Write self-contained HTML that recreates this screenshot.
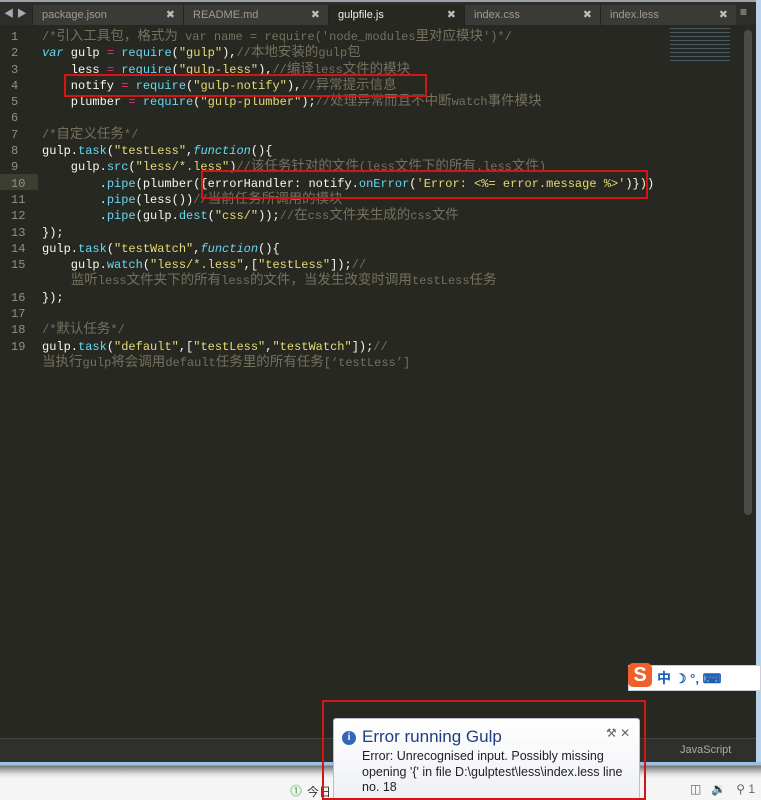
<!DOCTYPE html>
<html><head><meta charset="utf-8"><style>
*{margin:0;padding:0;box-sizing:border-box}
body{width:761px;height:800px;overflow:hidden;background:#f4f4f4;position:relative;font-family:"Liberation Sans","Noto Sans CJK SC",sans-serif}
.tabs{position:absolute;left:0;top:0;width:756px;height:25px;background:#2d2e2a;border-top:2px solid #9aa2aa}
.tab{position:absolute;top:3px;height:22px;background:#3a3b36;color:#9c9c94;font-size:11px;line-height:20px;padding-left:9px;border-left:1px solid #222}
.tab .x{position:absolute;right:8px;top:0;color:#bbb;font-size:11px}
.tab.act{background:#272822;color:#eee}
.ed{position:absolute;left:0;top:25px;width:756px;height:713px;background:#272822}
.code{position:absolute;left:0;top:4px;font-family:"Liberation Mono","Noto Sans CJK SC",monospace;font-size:12px;line-height:16.3px;color:#f8f8f2;white-space:pre}
.code i{font-style:normal;font-size:13.5px;line-height:10px}
.ln{display:inline-block;width:42px;padding-left:11px;color:#8f908a}
.c{color:#75715e}.s{color:#e6db74}.f{color:#66d9ef}.k{color:#66d9ef;font-style:italic}.o{color:#f92672}
.rb{position:absolute;border:2.5px solid #d41515}
.status{position:absolute;left:0;top:738px;width:756px;height:24px;background:#2f302c;border-top:1px solid #444;color:#aaa;font-size:11px}
.frame{position:absolute;right:0;top:0;width:5px;height:770px;background:#b8d4ea}
.task{position:absolute;left:0;top:762px;width:761px;height:38px;background:linear-gradient(#9ec0e0 0,#9ec0e0 3px,#777 4px,#ddd 12px,#f5f5f5 16px)}
</style></head><body>
<div class="tabs">
<span style="position:absolute;left:4px;top:3px;color:#aaa;font-size:10px">◀ ▶</span>
<div class="tab" style="left:32px;width:151px">package.json<span class="x">✖</span></div>
<div class="tab" style="left:183px;width:145px">README.md<span class="x">✖</span></div>
<div class="tab act" style="left:328px;width:136px">gulpfile.js<span class="x">✖</span></div>
<div class="tab" style="left:464px;width:136px">index.css<span class="x">✖</span></div>
<div class="tab" style="left:600px;width:136px">index.less<span class="x">✖</span></div>
<span style="position:absolute;left:740px;top:3px;color:#ccc;font-size:12px">≡</span>
</div>
<div class="ed">
<div style="position:absolute;left:0;top:149px;width:38px;height:16px;background:#3e3d32"></div>
<div class="code"><span class="ln">1</span><span class="c">/*<i>引入工具包，格式为</i> var name = require('node_modules<i>里对应模块</i>')*/</span>
<span class="ln">2</span><span class="k">var</span> gulp <span class="o">=</span> <span class="f">require</span>(<span class="s">"gulp"</span>),<span class="c">//<i>本地安装的</i>gulp<i>包</i></span>
<span class="ln">3</span>    less <span class="o">=</span> <span class="f">require</span>(<span class="s">"gulp-less"</span>),<span class="c">//<i>编译</i>less<i>文件的模块</i></span>
<span class="ln">4</span>    notify <span class="o">=</span> <span class="f">require</span>(<span class="s">"gulp-notify"</span>),<span class="c">//<i>异常提示信息</i></span>
<span class="ln">5</span>    plumber <span class="o">=</span> <span class="f">require</span>(<span class="s">"gulp-plumber"</span>);<span class="c">//<i>处理异常而且不中断</i>watch<i>事件模块</i></span>
<span class="ln">6</span>
<span class="ln">7</span><span class="c">/*<i>自定义任务</i>*/</span>
<span class="ln">8</span>gulp.<span class="f">task</span>(<span class="s">"testLess"</span>,<span class="k">function</span>(){
<span class="ln">9</span>    gulp.<span class="f">src</span>(<span class="s">"less/*.less"</span>)<span class="c">//<i>该任务针对的文件</i>(less<i>文件下的所有</i>.less<i>文件</i>)</span>
<span class="ln">10</span>        .<span class="f">pipe</span>(plumber({errorHandler: notify.<span class="f">onError</span>(<span class="s">'Error: &lt;%= error.message %&gt;'</span>)}))
<span class="ln">11</span>        .<span class="f">pipe</span>(less())<span class="c">//<i>当前任务所调用的模块</i></span>
<span class="ln">12</span>        .<span class="f">pipe</span>(gulp.<span class="f">dest</span>(<span class="s">"css/"</span>));<span class="c">//<i>在</i>css<i>文件夹生成的</i>css<i>文件</i></span>
<span class="ln">13</span>});
<span class="ln">14</span>gulp.<span class="f">task</span>(<span class="s">"testWatch"</span>,<span class="k">function</span>(){
<span class="ln">15</span>    gulp.<span class="f">watch</span>(<span class="s">"less/*.less"</span>,[<span class="s">"testLess"</span>]);<span class="c">//</span>
<span class="ln"></span>    <span class="c"><i>监听</i>less<i>文件夹下的所有</i>less<i>的文件，当发生改变时调用</i>testLess<i>任务</i></span>
<span class="ln">16</span>});
<span class="ln">17</span>
<span class="ln">18</span><span class="c">/*<i>默认任务</i>*/</span>
<span class="ln">19</span>gulp.<span class="f">task</span>(<span class="s">"default"</span>,[<span class="s">"testLess"</span>,<span class="s">"testWatch"</span>]);<span class="c">//</span>
<span class="ln"></span><span class="c"><i>当执行</i>gulp<i>将会调用</i>default<i>任务里的所有任务</i>[‘testLess’]</span></div>
<div style="position:absolute;left:670px;top:3px;width:60px;height:36px;opacity:.5;background:repeating-linear-gradient(#6a8aa0 0 1px,transparent 1px 4px)"></div>
<div style="position:absolute;left:744px;top:5px;width:8px;height:485px;background:#4a4b46;border-radius:4px"></div>
</div>
<div class="rb" style="left:64px;top:74px;width:363px;height:23px"></div>
<div class="rb" style="left:201px;top:170px;width:447px;height:29px"></div>
<div class="status"><span style="position:absolute;left:680px;top:5px">JavaScript</span></div>
<div class="frame"></div>
<div class="task"><span style="position:absolute;left:290px;top:20px;color:#3a3;font-size:12px">⓵</span><span style="position:absolute;left:307px;top:21px;font-size:12px;color:#333">今日</span>
<span style="position:absolute;left:690px;top:20px;color:#666;font-size:12px">◫ &nbsp; 🔉 &nbsp; ⚲ 1</span></div>
<div style="position:absolute;left:628px;top:665px;width:133px;height:26px;background:#fff;border:1px solid #ccd"></div>
<div style="position:absolute;left:628px;top:663px;width:24px;height:24px;background:#f0602a;border-radius:5px;color:#fff;font-weight:bold;font-size:20px;line-height:24px;text-align:center">S</div>
<div style="position:absolute;left:657px;top:668px;font-size:14px;color:#1a5fb4;font-weight:bold">中 <span style="font-size:13px">☽ °, ⌨</span></div>
<div style="position:absolute;left:333px;top:718px;width:307px;height:82px;background:linear-gradient(#fff,#eef0f5);border:1px solid #b8c0cc;border-radius:3px">
<div style="position:absolute;left:8px;top:12px;width:14px;height:14px;border-radius:50%;background:#3466b8;color:#fff;font-size:10px;font-weight:bold;text-align:center;line-height:14px">i</div>
<div style="position:absolute;left:28px;top:8px;font-size:17px;color:#1f3d80">Error running Gulp</div>
<div style="position:absolute;left:272px;top:7px;font-size:12px;color:#666">⚒ ✕</div>
<div style="position:absolute;left:28px;top:30px;font-size:12.5px;line-height:15.5px;color:#222;width:272px">Error: Unrecognised input. Possibly missing opening '{' in file D:\gulptest\less\index.less line no. 18</div>
</div>
<div class="rb" style="left:322px;top:700px;width:324px;height:100px"></div>
</body></html>
